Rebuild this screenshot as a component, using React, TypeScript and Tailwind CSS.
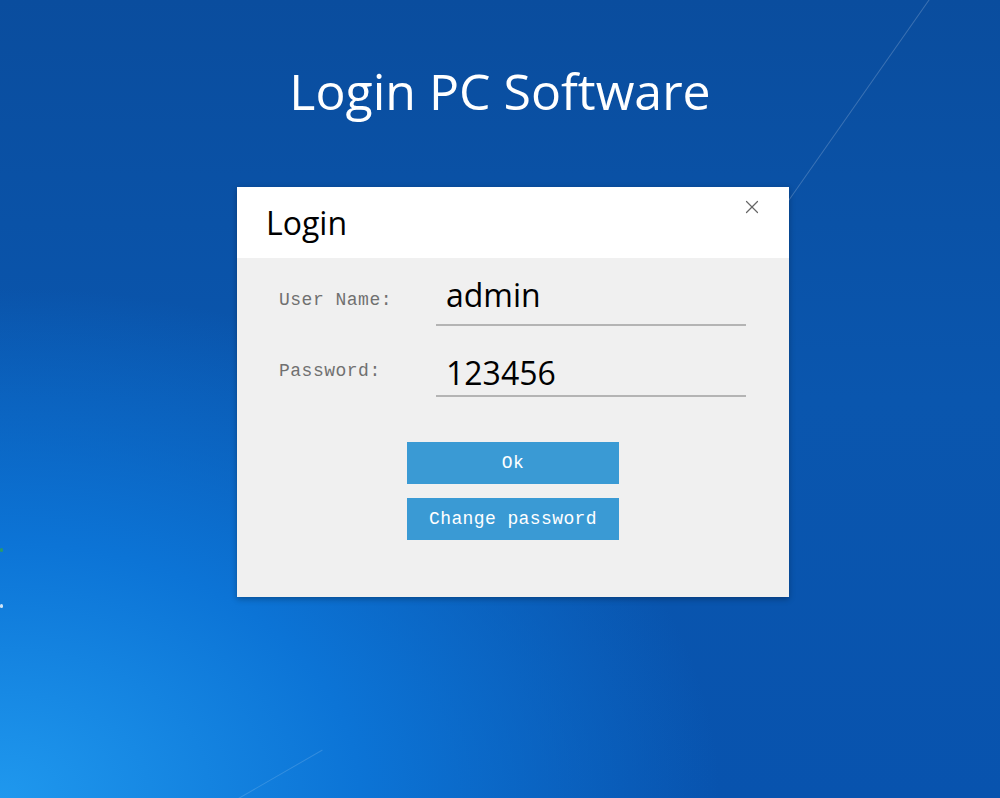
import { X } from "lucide-react"

function Field({ label, value, pb }: { label: string; value: string; pb: string }) {
  return (
    <div className="flex items-end">
      <div className="w-[199px] pl-[42px] pb-[12px] font-['Liberation_Mono',monospace] text-[18px] tracking-[0.5px] text-[#707070]">
        {label}
      </div>
      <div className={`w-[310px] border-b-2 border-[#b4b4b4] pl-[10px] ${pb} font-['Open_Sans',sans-serif] text-[32px] leading-[36px] text-black`}>
        {value}
      </div>
    </div>
  )
}

export default function App() {
  return (
    <div className="relative w-[1000px] h-[798px] overflow-hidden bg-[radial-gradient(ellipse_90%_80%_at_0%_100%,#1f98ee_0%,#0c74d6_40%,rgba(8,90,185,0)_80%),linear-gradient(180deg,#0a4d9e_0%,#0a56ae_50%,#0853ae_100%)]">
      {/* faint streaks */}
      <div className="absolute left-[855px] top-[-25px] h-[260px] w-px rotate-[35deg] bg-white/20" />
      <div className="absolute left-[270px] top-[720px] h-[120px] w-px rotate-[60deg] bg-white/15" />
      <div className="absolute left-0 top-[548px] h-[4px] w-[3px] rounded-full bg-[#2a9a6a]" />
      <div className="absolute left-0 top-[604px] h-[4px] w-[3px] rounded-full bg-white/80" />

      <div className="flex flex-col items-center">
        <h1 className="mt-[57px] font-['Open_Sans',sans-serif] text-[50px] leading-[68px] text-white">
          Login PC Software
        </h1>

        <div className="mt-[62px] ml-[26px] w-[552px] h-[410px] bg-[#f0f0f0] shadow-[0_2px_6px_rgba(0,0,0,0.3)] flex flex-col">
          <div className="relative h-[71px] bg-white flex items-center pl-[29px]">
            <span className="font-['Open_Sans',sans-serif] text-[32px] text-black">Login</span>
            <X className="absolute right-[26px] top-[9px] text-[#666]" size={22} strokeWidth={1.3} />
          </div>

          <div className="flex flex-col gap-[29px] pt-[19px]">
            <Field label="User Name:" value="admin" pb="pb-[11px]" />
            <Field label="Password:" value="123456" pb="pb-[4px]" />
          </div>

          <div className="flex flex-col items-center gap-[14px] mt-[45px]">
            <button className="w-[212px] h-[42px] bg-[#3a9ad4] text-white font-['Liberation_Mono',monospace] text-[18px] tracking-[0.4px]">
              Ok
            </button>
            <button className="w-[212px] h-[42px] bg-[#3a9ad4] text-white font-['Liberation_Mono',monospace] text-[18px] tracking-[0.4px]">
              Change password
            </button>
          </div>
        </div>
      </div>
    </div>
  )
}
